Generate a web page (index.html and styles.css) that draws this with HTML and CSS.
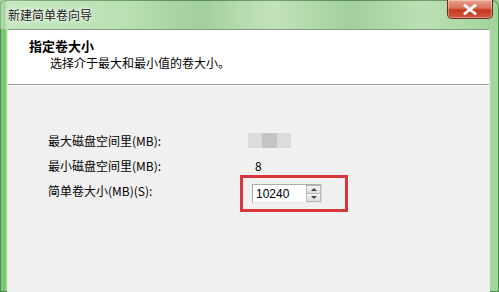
FILE: index.html
```html
<!DOCTYPE html>
<html lang="zh-CN">
<head>
    <meta charset="UTF-8">
    <title>新建简单卷向导</title>
    <link rel="stylesheet" href="styles.css">
</head>
<body>
    <div class="window">
        <!-- Title bar -->
        <div class="titlebar">
            <span class="title">新建简单卷向导</span>
            <button class="close" type="button">
                <svg width="14" height="11" viewBox="0 0 14 11">
                    <path d="M2 1.5 L12 9.5 M12 1.5 L2 9.5" stroke="#fff" stroke-width="2.8" stroke-linecap="square"/>
                </svg>
            </button>
        </div>

        <div class="frame">
            <div class="edge left"></div>
            <div class="client">
                <!-- Wizard header -->
                <div class="header">
                    <div class="heading">指定卷大小</div>
                    <div class="subheading">选择介于最大和最小值的卷大小。</div>
                </div>

                <!-- Wizard page -->
                <div class="page">
                    <div class="row">
                        <span class="label">最大磁盘空间里(MB):</span>
                        <span class="blur"><i></i><i class="mid"></i><i></i></span>
                    </div>
                    <div class="row">
                        <span class="label">最小磁盘空间里(MB):</span>
                        <span class="value">8</span>
                    </div>
                    <div class="row size-row">
                        <span class="label">简单卷大小(MB)(S):</span>
                        <div class="highlight">
                            <div class="spin">
                                <input type="text" value="10240">
                                <div class="spin-buttons">
                                    <span class="arrow up"></span>
                                    <span class="arrow down"></span>
                                </div>
                            </div>
                        </div>
                    </div>
                </div>
            </div>
            <div class="edge right"></div>
        </div>
    </div>
</body>
</html>
```

FILE: styles.css
```css
body {
    margin: 0;
    width: 499px;
    height: 292px;
    overflow: hidden;
    font-family: "Noto Sans CJK SC", "Liberation Sans", sans-serif;
    font-size: 12px;
    color: #000;
    background: #9fd397;
}
.window {
    display: flex;
    flex-direction: column;
    height: 292px;
    background: linear-gradient(to right, #4f9f4a 0, #8fcd87 2px, #6fbf66 4px, #a8dba0 7px, #b4dcac 50%, #a6d69e 100%);
    border-radius: 6px 7px 0 0;
    box-shadow: inset 0 0 0 1px #4e8a4a;
}
.titlebar {
    display: flex;
    align-items: flex-start;
    height: 29px;
    flex-shrink: 0;
    background: linear-gradient(to right, rgba(255,255,255,0.35) 0, rgba(255,255,255,0.15) 25%, rgba(90,150,90,0.18) 40%, rgba(255,255,255,0.2) 55%, rgba(90,150,90,0.15) 70%, rgba(255,255,255,0.2) 85%, rgba(120,190,120,0.1) 100%);
    border-radius: 6px 7px 0 0;
}
.title {
    margin: 7px 0 0 8px;
    line-height: 16px;
    color: #1a1a1a;
    text-shadow: 0 0 6px #fff, 0 0 3px #fff;
}
.close {
    margin: 0 6px 0 auto;
    width: 46px;
    height: 19px;
    padding: 0;
    border: 1px solid #6d2a1e;
    border-top: none;
    border-radius: 0 0 5px 5px;
    background: linear-gradient(to bottom, #e9a28f 0, #d9735b 45%, #c53a22 55%, #d0593a 100%);
    box-shadow: inset 0 0 0 1px rgba(255,255,255,0.35);
    display: flex;
    align-items: center;
    justify-content: center;
}
.frame {
    display: flex;
    flex: 1;
}
.edge.left {
    width: 7px;
}
.edge.right {
    width: 9px;
}
.client {
    flex: 1;
    display: flex;
    flex-direction: column;
    background: #f0f0f0;
    border-top: 1px solid #7f9f7f;
    border-left: 1px solid #e4efe4;
    border-right: 1px solid #e4efe4;
}
.header {
    height: 55px;
    background: #fff;
    border-bottom: 1px solid #a0a0a0;
    box-shadow: 0 1px 0 #fff;
    box-sizing: border-box;
    padding: 7px 0 0 21px;
}
.heading {
    font-weight: bold;
    font-size: 13px;
    line-height: 17px;
}
.subheading {
    padding-left: 21px;
    line-height: 17px;
}
.page {
    padding: 43px 0 0 40px;
}
.row {
    display: flex;
    align-items: center;
    height: 25px;
}
.label {
    width: 192px;
    flex-shrink: 0;
}
.blur {
    display: flex;
    margin-left: 8px;
    height: 15px;
}
.blur i {
    width: 14px;
    background: #dcdcdc;
}
.blur i.mid {
    width: 15px;
    background: #c4c4c4;
}
.value {
    margin-left: 15px;
}
.size-row {
    height: auto;
    margin-top: -3px;
}
.size-row .label {
    margin-bottom: 7px;
}
.highlight {
    width: 108px;
    height: 37px;
    box-sizing: border-box;
    border: 3px solid #d7373b;
    padding: 6px 0 0 9px;
}
.spin {
    display: flex;
    width: 70px;
    height: 19px;
    box-sizing: border-box;
    border: 1px solid #abadb3;
    border-bottom-color: #e3e9ef;
    border-right-color: #dbdfe6;
    background: #fff;
}
.spin input {
    width: 50px;
    border: none;
    padding: 0 0 0 3px;
    font-family: "Liberation Sans", sans-serif;
    font-size: 12px;
    outline: none;
    background: transparent;
}
.spin-buttons {
    display: flex;
    flex-direction: column;
    width: 15px;
    margin-left: auto;
}
.arrow {
    flex: 1;
    position: relative;
    border: 1px solid #b8b8b8;
    background: linear-gradient(#f6f6f6, #dedede);
}
.arrow.up {
    border-bottom: none;
}
.arrow::after {
    content: "";
    position: absolute;
    left: 4px;
    top: 2px;
    border-left: 3px solid transparent;
    border-right: 3px solid transparent;
}
.arrow.up::after {
    border-bottom: 3px solid #444;
}
.arrow.down::after {
    border-top: 3px solid #444;
}
```
